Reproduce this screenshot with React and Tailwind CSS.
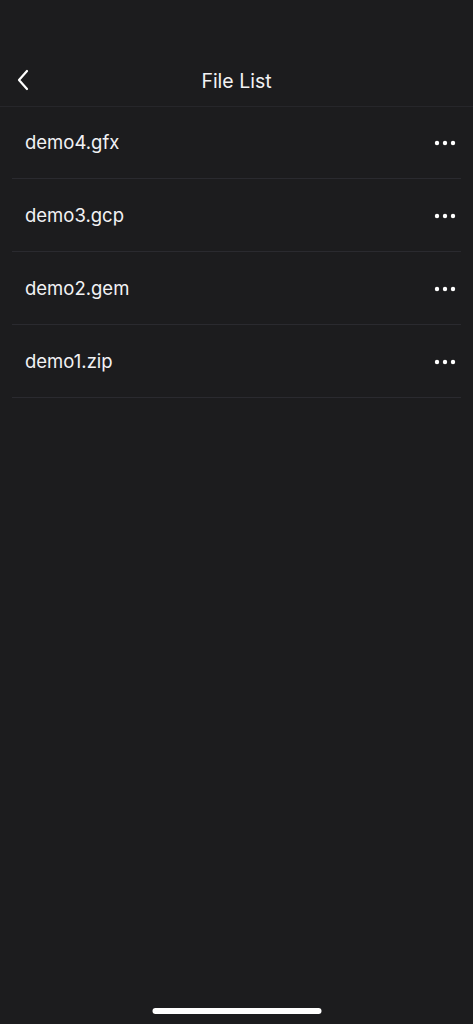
import React from "react";

const files = ["demo4.gfx", "demo3.gcp", "demo2.gem", "demo1.zip"];

const MoreDots = () => (
  <svg width="22" height="6" viewBox="0 0 22 6" fill="#ffffff">
    <circle cx="3" cy="3" r="2.2" />
    <circle cx="11" cy="3" r="2.2" />
    <circle cx="19" cy="3" r="2.2" />
  </svg>
);

const BackIcon = () => (
  <svg width="14" height="22" viewBox="0 0 14 22" fill="none">
    <path d="M11 2 L3 11 L11 20" stroke="#ffffff" strokeWidth="2.2" strokeLinecap="round" strokeLinejoin="round" />
  </svg>
);

const FileRow = ({ name }) => (
  <div className="flex h-[73px] items-center justify-between border-b border-[#2a2a2f] pl-[13px] pr-[5px] pt-[2px]">
    <span className="text-[18.5px] text-[#f2f2f4]">{name}</span>
    <MoreDots />
  </div>
);

export default function App() {
  return (
    <div
      className="relative flex min-h-screen flex-col bg-[#1c1c1e] pt-[55px]"
      style={{ fontFamily: "Inter, 'Noto Sans', sans-serif" }}
    >
      <div className="relative flex h-[52px] items-center justify-center border-b border-[#26262a] pt-[3px]">
        <button className="absolute left-[16px] top-[14px]">
          <BackIcon />
        </button>
        <h1 className="text-[19.5px] text-[#f2f2f4]">File List</h1>
      </div>

      <div className="mx-3 -mt-px">
        {files.map((f) => (
          <FileRow key={f} name={f} />
        ))}
      </div>

      <div className="absolute bottom-[10px] left-1/2 h-[6px] w-[169px] -translate-x-1/2 rounded-full bg-white" />
    </div>
  );
}
